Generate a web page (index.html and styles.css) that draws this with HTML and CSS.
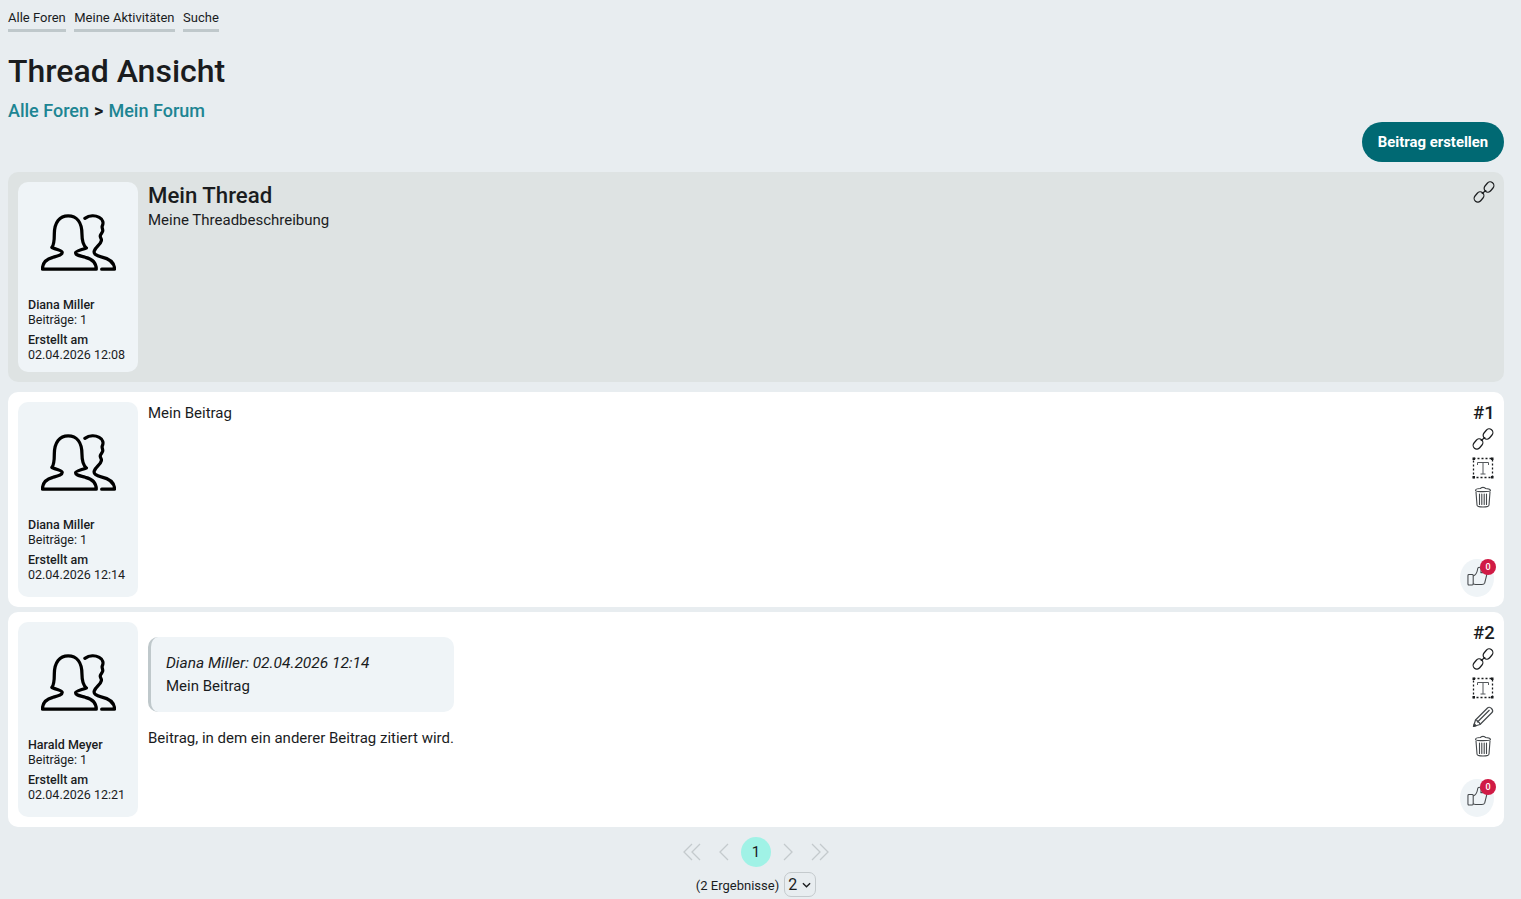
FILE: index.html
```html
<!DOCTYPE html>
<html lang="de">
<head>
<meta charset="utf-8">
<title>Thread Ansicht</title>
<link rel="stylesheet" href="styles.css">
</head>
<body>
<svg class="defs" width="0" height="0" aria-hidden="true">
  <defs>
    <symbol id="i-users" viewBox="0 0 76 58">
      <path d="M1.500 55.500C1.500 48 6 45 12 43.500C17 42 21.500 41 21.500 38.500C21.500 36.500 18 36.500 11 33.500C13.500 31 13.500 26 13.500 20C13.500 8 19 1.500 27.500 1.500C36 1.500 41.500 8 41.500 20C41.500 26 42 31 46 34C41 36 35 37 35 39C35 41.500 40 42 45 43.500C51 45 56 48.500 56 55.500Z" fill="none" stroke="currentColor" stroke-width="3.300" stroke-linejoin="round"/>
      <path d="M44.500 4C49 1 55 1 59 3C63 5 63.500 9 62 12C61.500 14 63 15 62.500 17C62 19 60 20 60 22C60 24 62 25 61 27C60 31 56 32 54 37C53 40 56 42 61 43C68 44.500 74.500 48 74.500 55.500H61.500" fill="none" stroke="currentColor" stroke-width="3.300" stroke-linecap="round" stroke-linejoin="round"/>
    </symbol>
    <symbol id="i-link" viewBox="0 0 22 22">
      <g fill="none" stroke="currentColor" stroke-width="1.200">
        <rect x="0.500" y="12.300" width="11" height="7.400" rx="3.700" transform="rotate(-50 6 16)"/>
        <rect x="10.500" y="2.300" width="11" height="7.400" rx="3.700" transform="rotate(-50 16 6)"/>
        <path d="M8.800 12.800L13.200 9.200"/>
      </g>
    </symbol>
    <symbol id="i-text" viewBox="0 0 22 22">
      <rect x="1.500" y="1.500" width="19" height="19" fill="none" stroke="currentColor" stroke-width="1.300" stroke-dasharray="2 2"/>
      <g fill="currentColor">
        <rect x="0.500" y="0.500" width="2.500" height="2.500"/><rect x="19" y="0.500" width="2.500" height="2.500"/>
        <rect x="0.500" y="19" width="2.500" height="2.500"/><rect x="19" y="19" width="2.500" height="2.500"/>
      </g>
      <path d="M5.500 8V5.500H16.500V8M11 5.500V17M8.500 17H13.500" fill="none" stroke="#55595c" stroke-width="1"/>
    </symbol>
    <symbol id="i-trash" viewBox="0 0 18 22">
      <g fill="none" stroke="#44484b" stroke-width="1.100" stroke-linecap="round">
        <path d="M1.500 4.500C1.500 3 5 2.500 6.500 2.500C7 1 11 1 11.500 2.500C13 2.500 16.500 3 16.500 4.500C16.500 6 1.500 6 1.500 4.500Z"/>
        <path d="M2 6L3 19C3 20.500 5 21 9 21C13 21 15 20.500 15 19L16 6"/>
        <path d="M5.500 8V18.500M7.800 8V18.500M10.200 8V18.500M12.500 8V18.500"/>
      </g>
    </symbol>
    <symbol id="i-pencil" viewBox="0 0 22 22">
      <g fill="none" stroke="#44484b" stroke-width="1.200" stroke-linejoin="round">
        <path d="M1.500 20.500L3.500 14L15.500 2C16.500 1 18 1 19.500 2.500C21 4 21 5.500 20 6.500L8 18.500Z"/>
        <path d="M3.500 14C5 14 5.500 14.500 5.500 16C7 16 8 16.500 8 18.500M5.500 16L17.500 4"/>
        <path d="M1.500 20.500L2.300 17.800L4.200 19.700Z" fill="currentColor"/>
      </g>
    </symbol>
    <symbol id="i-thumb" viewBox="0 0 22 22">
      <g fill="none" stroke="#44484b" stroke-width="1.100" stroke-linejoin="round">
        <rect x="1" y="10" width="5.500" height="11" rx="1"/>
        <path d="M6.500 11.500C9 10.500 10.500 8 11 5C11.200 3 12 2 13.500 2.500C15 3 15 5 14.500 8H19C20.500 8 21 9.500 20.500 11L18.500 19C18 20.500 17 20.500 15.500 20.500H9C7.500 20.500 6.500 20 6.500 19.500"/>
      </g>
    </symbol>
  </defs>
</svg>

<nav class="tabs">
  <a class="tab">Alle Foren</a>
  <a class="tab">Meine Aktivitäten</a>
  <a class="tab">Suche</a>
</nav>

<h1 class="title">Thread Ansicht</h1>

<div class="crumbs"><a class="crumb">Alle Foren</a> <b class="sep">&gt;</b> <a class="crumb">Mein Forum</a></div>

<div class="actions"><button class="primary">Beitrag erstellen</button></div>

<article class="card card-head">
  <aside class="author">
    <svg class="avatar"><use href="#i-users"/></svg>
    <div class="meta">
      <strong>Diana Miller</strong>
      <span>Beiträge: 1</span>
      <strong class="created">Erstellt am</strong>
      <span>02.04.2026 12:08</span>
    </div>
  </aside>
  <div class="content">
    <h2 class="thread-title">Mein Thread</h2>
    <p class="text">Meine Threadbeschreibung</p>
  </div>
  <div class="tools tools-head">
    <svg class="tool"><use href="#i-link"/></svg>
  </div>
</article>

<article class="card card-post">
  <aside class="author">
    <svg class="avatar"><use href="#i-users"/></svg>
    <div class="meta">
      <strong>Diana Miller</strong>
      <span>Beiträge: 1</span>
      <strong class="created">Erstellt am</strong>
      <span>02.04.2026 12:14</span>
    </div>
  </aside>
  <div class="content">
    <p class="text">Mein Beitrag</p>
  </div>
  <div class="tools">
    <div class="num">#1</div>
    <svg class="tool"><use href="#i-link"/></svg>
    <svg class="tool"><use href="#i-text"/></svg>
    <svg class="tool"><use href="#i-trash"/></svg>
    <div class="like">
      <svg class="thumb"><use href="#i-thumb"/></svg>
      <span class="badge">0</span>
    </div>
  </div>
</article>

<article class="card card-post card-last">
  <aside class="author">
    <svg class="avatar"><use href="#i-users"/></svg>
    <div class="meta">
      <strong>Harald Meyer</strong>
      <span>Beiträge: 1</span>
      <strong class="created">Erstellt am</strong>
      <span>02.04.2026 12:21</span>
    </div>
  </aside>
  <div class="content">
    <blockquote class="quote">
      <em class="quote-head">Diana Miller: 02.04.2026 12:14</em>
      <span>Mein Beitrag</span>
    </blockquote>
    <p class="text">Beitrag, in dem ein anderer Beitrag zitiert wird.</p>
  </div>
  <div class="tools">
    <div class="num">#2</div>
    <svg class="tool"><use href="#i-link"/></svg>
    <svg class="tool"><use href="#i-text"/></svg>
    <svg class="tool"><use href="#i-pencil"/></svg>
    <svg class="tool"><use href="#i-trash"/></svg>
    <div class="like">
      <svg class="thumb"><use href="#i-thumb"/></svg>
      <span class="badge">0</span>
    </div>
  </div>
</article>

<div class="pager">
  <svg class="arrow" viewBox="0 0 20 20"><path d="M10 2L2 10L10 18M18 2L10 10L18 18"/></svg>
  <svg class="arrow" viewBox="0 0 20 20"><path d="M14 2L6 10L14 18"/></svg>
  <span class="current">1</span>
  <svg class="arrow" viewBox="0 0 20 20"><path d="M6 2L14 10L6 18"/></svg>
  <svg class="arrow" viewBox="0 0 20 20"><path d="M2 2L10 10L2 18M10 2L18 10L10 18"/></svg>
</div>
<div class="results">
  <span class="count">(2 Ergebnisse)</span>
  <span class="select">2<svg class="chev" viewBox="0 0 10 6"><path d="M1 1L5 5L9 1"/></svg></span>
</div>
</body>
</html>
```

FILE: styles.css
```css
* { box-sizing: border-box; }

html, body { height: 899px; overflow: hidden; }

body {
  margin: 0;
  padding: 0 17px 0 8px;
  background: #e8edf0;
  color: #1a1c1e;
  font-family: Roboto, "Liberation Sans", sans-serif;
  font-size: 15px;
  line-height: 20px;
}

.defs { position: absolute; }

.tabs { display: flex; gap: 8.500px; padding-top: 8px; }

.tab {
  display: block;
  height: 24px;
  font-size: 13px;
  line-height: 19px;
  border-bottom: 3px solid #bfc8cb;
}

.title {
  margin: 19px 0 0;
  font-size: 32px;
  line-height: 40px;
  font-weight: 500;
}

.crumbs {
  margin-top: 9px;
  font-size: 18px;
  line-height: 22px;
  font-weight: 500;
}

.crumb { color: #1d8593; }
.sep { margin: 0 0.600px; font-weight: 700; }

.actions { display: flex; justify-content: flex-end; }

.primary {
  width: 142px;
  height: 40px;
  border: 0;
  border-radius: 20px;
  background: #006973;
  color: #fff;
  font: 700 14.900px/20px Roboto, "Liberation Sans", sans-serif;
}

.card {
  display: flex;
  padding: 10px;
  border-radius: 10px;
  background: #fff;
}

.card-head { height: 210px; margin-top: 10px; background: #dee3e3; }
.card-post { height: 215px; margin-top: 10px; }
.card-last { margin-top: 5px; }

.author {
  flex: 0 0 120px;
  display: flex;
  flex-direction: column;
  padding: 0 10px;
  border-radius: 10px;
  background: #eff4f7;
}

.avatar {
  flex: none;
  width: 75px;
  height: 58px;
  margin: 32px 0 0 13px;
  color: #000;
}

.meta {
  margin-top: 25px;
  display: flex;
  flex-direction: column;
  font-size: 12.500px;
  line-height: 15px;
}

.meta strong { font-weight: 500; }
.created { margin-top: 5px; }

.content { flex: 1; padding: 0 10px; min-width: 0; }

.thread-title {
  margin: 0 0 2px;
  font-size: 22.200px;
  line-height: 26px;
  font-weight: 500;
}

.text { margin: 0; font-size: 15px; line-height: 20px; }

.card-post .content { padding-top: 1px; }

.quote {
  display: flex;
  flex-direction: column;
  gap: 3px;
  width: 306px;
  height: 75px;
  margin: 14px 0 16px;
  padding: 16px 10px 0 15px;
  border-left: 3px solid #bfc8cb;
  border-radius: 10px;
  background: #eff4f7;
  font-size: 15px;
  line-height: 20px;
}

.quote-head { font-size: 15.500px; }

.tools {
  flex: 0 0 auto;
  width: 34px;
  display: flex;
  flex-direction: column;
  align-items: center;
  color: #1a1c1e;
}

.tools-head { width: 22px; }
.tools-head .tool { margin: -1px 0 0 1px; }

.num {
  width: 100%;
  padding-left: 13px;
  text-align: center;
  font-size: 18.500px;
  line-height: 22px;
  font-weight: 500;
}

.card-post .tool { margin-left: 11px; }

.tool { flex: none; width: 22px; height: 22px; margin-top: 7px; }
.card-post .num + .tool { margin-top: 4px; }

.like {
  position: relative;
  flex: none;
  width: 34px;
  height: 38px;
  margin-top: auto;
  border-radius: 50%;
  background: #eff4f7;
}

.thumb {
  position: absolute;
  left: 7px;
  top: 6px;
  width: 21px;
  height: 21px;
}

.badge {
  position: absolute;
  top: 0;
  right: -2px;
  width: 16px;
  height: 16px;
  border-radius: 50%;
  background: #d01b45;
  color: #fff;
  font-size: 9px;
  font-weight: 500;
  line-height: 16px;
  text-align: center;
}

.pager {
  display: flex;
  justify-content: center;
  align-items: center;
  gap: 12px;
  height: 30px;
  margin-top: 10px;
}

.arrow {
  flex: none;
  width: 20px;
  height: 20px;
  fill: none;
  stroke: #c4cacd;
  stroke-width: 1.300;
}

.current {
  width: 30px;
  height: 30px;
  margin: 0 -5px;
  border-radius: 50%;
  background: #a0f2e6;
  text-align: center;
  font-size: 15px;
  line-height: 30px;
}

.results {
  display: flex;
  justify-content: center;
  align-items: center;
  gap: 5px;
  height: 24px;
  margin-top: 6px;
  font-size: 13px;
}

.count { padding-top: 2px; }

.select {
  display: flex;
  align-items: center;
  gap: 5px;
  width: 32px;
  height: 25px;
  margin-top: -1px;
  padding-left: 3px;
  border: 1px solid #c4cacd;
  border-radius: 7px;
  font-size: 16px;
  line-height: 20px;
}

.chev {
  width: 9px;
  height: 6px;
  fill: none;
  stroke: #1a1c1e;
  stroke-width: 1.500;
}
```
